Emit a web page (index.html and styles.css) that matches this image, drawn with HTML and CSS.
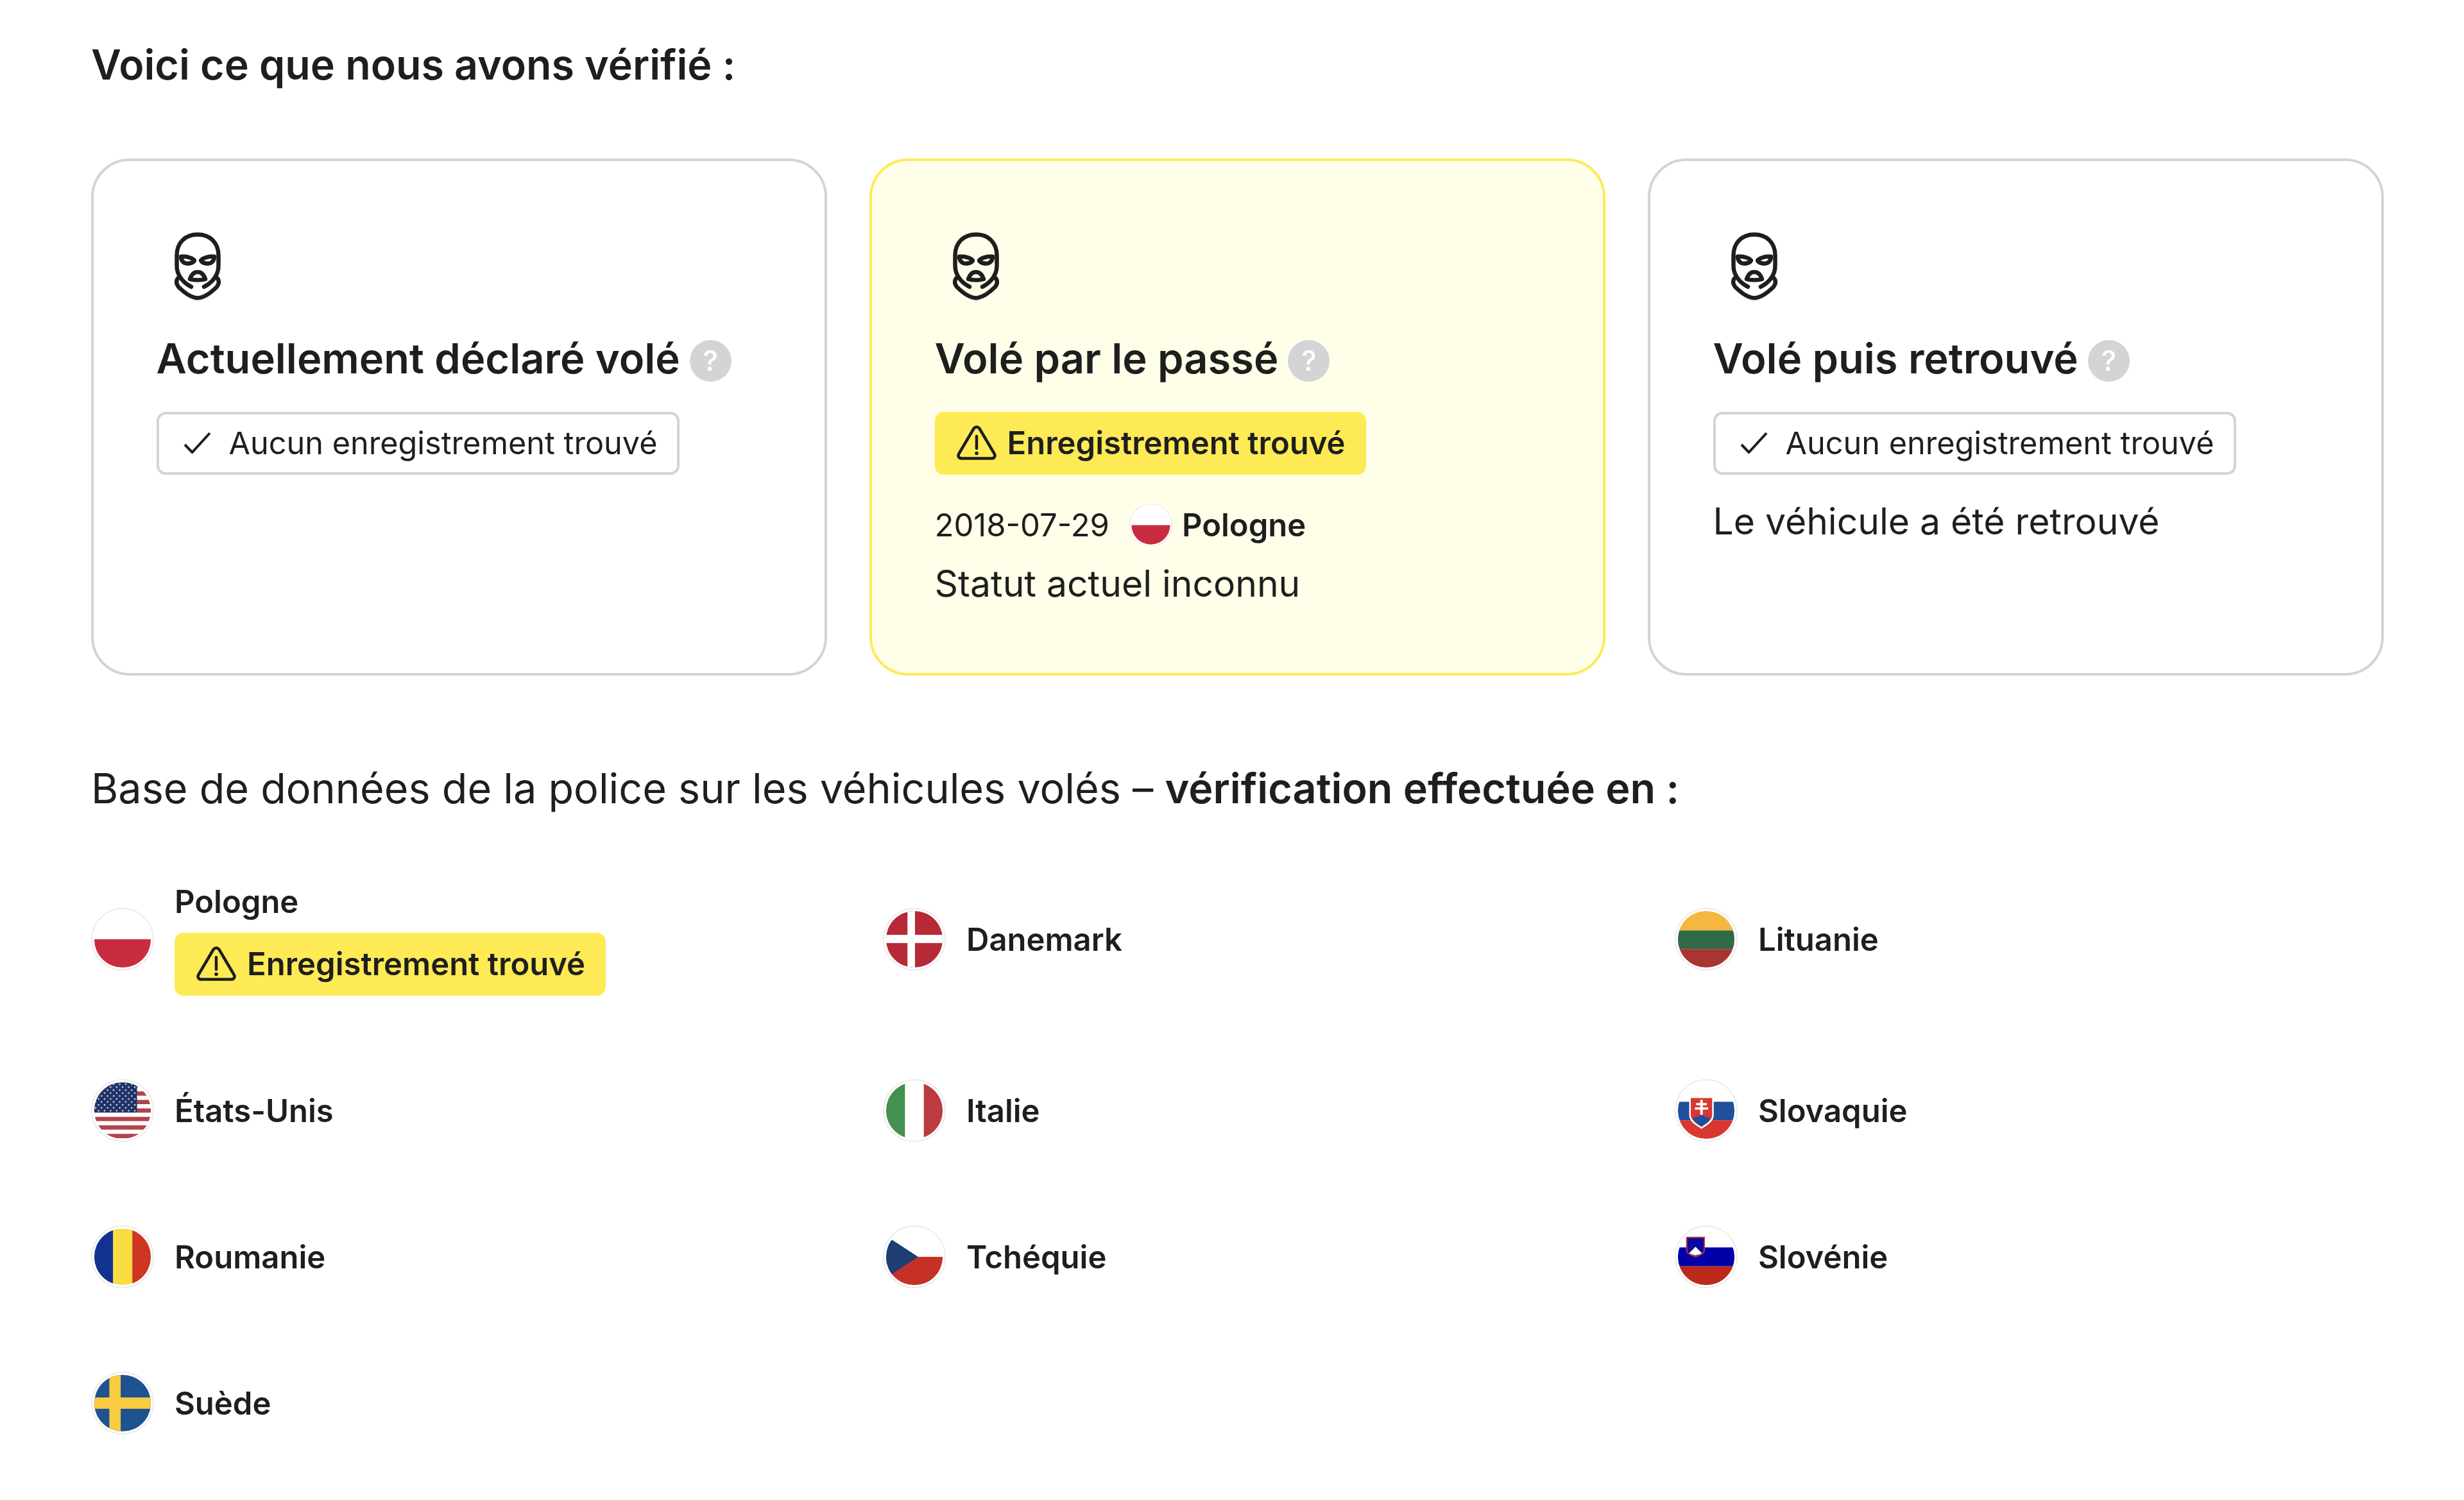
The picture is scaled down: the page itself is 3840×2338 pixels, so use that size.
FILE: index.html
```
<!DOCTYPE html>
<html lang="fr">
<head>
<meta charset="utf-8">
<title>Vérification</title>
<link rel="stylesheet" href="styles.css">
</head>
<body>
<svg class="defs" width="0" height="0" aria-hidden="true">
  <defs>
    <clipPath id="fc"><circle cx="50" cy="50" r="45"/></clipPath>
    <symbol id="mask" viewBox="0 0 72 106">
      <g fill="none" stroke="currentColor" stroke-width="6.500" stroke-linecap="round" stroke-linejoin="round">
        <path d="M26 85C12 78 3.500 66 3.500 52V36C3.500 16 17 3.500 36 3.500S68.500 16 68.500 36V52C68.500 66 60 78 46 85"/>
        <path d="M5 72C2 76 3 81 6 85C14 93 26 102 36 102.500C46 102 58 93 66 85C69 81 70 76 67 72"/>
        <path d="M10 38C18 37 28 40 31 44C29 48 21 50 16 48C12 46 10 42 10 38Z"/>
        <path d="M62 38C54 37 44 40 41 44C43 48 51 50 56 48C60 46 62 42 62 38Z"/>
        <path d="M36 62C42 62 46 67 48 73C42 75 30 75 24 73C26 67 30 62 36 62Z"/>
      </g>
    </symbol>
    <symbol id="warn" viewBox="0 0 62 54">
      <g fill="none" stroke="currentColor" stroke-width="4.500" stroke-linecap="round" stroke-linejoin="round">
        <path d="M26.500 5L3.500 44C1 48 3.500 51.500 7.500 51.500H54.500C58.500 51.500 61 48 58.500 44L35.500 5C33 1.500 29 1.500 26.500 5Z"/>
        <path d="M31 17V36"/>
      </g>
      <circle cx="31" cy="43.500" r="2.800" fill="currentColor"/>
    </symbol>
    <symbol id="check" viewBox="0 0 43 34">
      <path d="M2 20L13.500 32L41 2" fill="none" stroke="currentColor" stroke-width="4"/>
    </symbol>
    <symbol id="ring" viewBox="0 0 100 100">
      <circle cx="50" cy="50" r="49" fill="#fff" stroke="#ececec" stroke-width="2"/>
    </symbol>
    <pattern id="stars" width="9.600" height="9.400" patternUnits="userSpaceOnUse" x="5" y="6">
      <circle cx="2" cy="2" r="1.250" fill="#dfe2ea"/>
      <circle cx="6.800" cy="6.700" r="1.250" fill="#dfe2ea"/>
    </pattern>
  </defs>
</svg>

<main class="page">
  <h2 class="heading">Voici ce que nous avons vérifié :</h2>

  <section class="cards">
    <article class="card">
      <svg class="mask"><use href="#mask"/></svg>
      <h3 class="card-title">Actuellement déclaré volé<span class="help">?</span></h3>
      <div class="badge badge-ok"><svg class="check"><use href="#check"/></svg>Aucun enregistrement trouvé</div>
    </article>

    <article class="card card-found">
      <svg class="mask"><use href="#mask"/></svg>
      <h3 class="card-title">Volé par le passé<span class="help">?</span></h3>
      <div class="badge badge-found"><svg class="warn"><use href="#warn"/></svg>Enregistrement trouvé</div>
      <div class="record">
        <span>2018-07-29</span>
        <svg class="flag flag-small" viewBox="0 0 100 100"><use href="#ring"/><g clip-path="url(#fc)"><rect y="50" width="100" height="50" fill="#C92C40"/></g></svg>
        <strong>Pologne</strong>
      </div>
      <p class="note note-record">Statut actuel inconnu</p>
    </article>

    <article class="card">
      <svg class="mask"><use href="#mask"/></svg>
      <h3 class="card-title">Volé puis retrouvé<span class="help">?</span></h3>
      <div class="badge badge-ok"><svg class="check"><use href="#check"/></svg>Aucun enregistrement trouvé</div>
      <p class="note">Le véhicule a été retrouvé</p>
    </article>
  </section>

  <p class="db-line">Base de données de la police sur les véhicules volés – <strong>vérification effectuée en :</strong></p>

  <ul class="countries">
    <li class="country">
      <svg class="flag" viewBox="0 0 100 100"><use href="#ring"/><g clip-path="url(#fc)"><rect y="50" width="100" height="50" fill="#C92C40"/></g></svg>
      <div class="country-body">
        <span>Pologne</span>
        <div class="badge badge-found"><svg class="warn"><use href="#warn"/></svg>Enregistrement trouvé</div>
      </div>
    </li>
    <li class="country">
      <svg class="flag" viewBox="0 0 100 100"><use href="#ring"/><g clip-path="url(#fc)"><rect width="100" height="100" fill="#B52A36"/><rect x="39" width="12" height="100" fill="#fff"/><rect y="43" width="100" height="13" fill="#fff"/></g></svg>
      <span>Danemark</span>
    </li>
    <li class="country">
      <svg class="flag" viewBox="0 0 100 100"><use href="#ring"/><g clip-path="url(#fc)"><rect width="100" height="36" fill="#F4B840"/><rect y="36" width="100" height="29.500" fill="#2F6B47"/><rect y="65.500" width="100" height="35" fill="#A83531"/></g></svg>
      <span>Lituanie</span>
    </li>
    <li class="country">
      <svg class="flag" viewBox="0 0 100 100"><use href="#ring"/><g clip-path="url(#fc)"><rect width="100" height="100" fill="#fff"/><rect y="6" width="100" height="6.800" fill="#B4434B"/><rect y="19.500" width="100" height="6.800" fill="#B4434B"/><rect y="33" width="100" height="6.800" fill="#B4434B"/><rect y="46.500" width="100" height="6.800" fill="#B4434B"/><rect y="60" width="100" height="6.800" fill="#B4434B"/><rect y="73.500" width="100" height="6.800" fill="#B4434B"/><rect y="87" width="100" height="7" fill="#B4434B"/><rect width="73" height="53" fill="#1E3268"/><rect width="73" height="53" fill="url(#stars)"/></g></svg>
      <span>États-Unis</span>
    </li>
    <li class="country">
      <svg class="flag" viewBox="0 0 100 100"><use href="#ring"/><g clip-path="url(#fc)"><rect x="35" width="30" height="100" fill="#fff"/><rect width="35" height="100" fill="#43914F"/><rect x="65" width="35" height="100" fill="#BB3B3F"/></g></svg>
      <span>Italie</span>
    </li>
    <li class="country">
      <svg class="flag" viewBox="0 0 100 100"><use href="#ring"/><g clip-path="url(#fc)"><rect y="36" width="100" height="29.500" fill="#204F9C"/><rect y="65.500" width="100" height="35" fill="#D93731"/><path d="M23 28H62V58C62 68 50 74 42.500 79C35 74 23 68 23 58Z" fill="#fff"/><path d="M25.500 30H59.500V57C59.500 66 49 71.500 42.500 76C36 71.500 25.500 66 25.500 57Z" fill="#D93731"/><path d="M28 63C32 60 35 61 37 60C39 58 40 56.500 42.500 56.500C45 56.500 46 58 48 60C50 61 53 60 57 63C54 69 47 72.500 42.500 75.500C38 72.500 31 69 28 63Z" fill="#204F9C"/><path d="M40.500 33H44.500V38H51V41.500H44.500V45H53V48.500H44.500V57H40.500V48.500H32V45H40.500V41.500H34V38H40.500Z" fill="#fff"/></g></svg>
      <span>Slovaquie</span>
    </li>
    <li class="country">
      <svg class="flag" viewBox="0 0 100 100"><use href="#ring"/><g clip-path="url(#fc)"><rect width="35" height="100" fill="#13318F"/><rect x="35" width="30.500" height="100" fill="#FBDC40"/><rect x="65.500" width="35" height="100" fill="#CE3621"/></g></svg>
      <span>Roumanie</span>
    </li>
    <li class="country">
      <svg class="flag" viewBox="0 0 100 100"><use href="#ring"/><g clip-path="url(#fc)"><rect width="100" height="100" fill="#fff"/><rect y="50" width="100" height="50" fill="#C53126"/><path d="M-2 12L56 50L-2 88Z" fill="#1E3E74"/></g></svg>
      <span>Tchéquie</span>
    </li>
    <li class="country">
      <svg class="flag" viewBox="0 0 100 100"><use href="#ring"/><g clip-path="url(#fc)"><rect y="35" width="100" height="30" fill="#0000A8"/><rect y="65" width="100" height="35" fill="#BC2A1C"/><path d="M19 19H47V40C47 46 38 47 33 50C28 47 19 46 19 40Z" fill="#0A0AA0" stroke="#C8352A" stroke-width="2"/><path d="M23 44L28 39L33 34L38 39L43 44C39 47 36 46.500 33 48C30 46.500 27 47 23 44Z" fill="#fff"/></g></svg>
      <span>Slovénie</span>
    </li>
    <li class="country">
      <svg class="flag" viewBox="0 0 100 100"><use href="#ring"/><g clip-path="url(#fc)"><rect width="100" height="100" fill="#1F5291"/><rect x="29" width="18" height="100" fill="#F9CB40"/><rect y="41" width="100" height="18" fill="#F9CB40"/></g></svg>
      <span>Suède</span>
    </li>
  </ul>
</main>
</body>
</html>
```

FILE: styles.css
```
* { box-sizing: border-box; }

html, body { margin: 0; padding: 0; background: #fff; }

body {
  font-family: "Inter", "Liberation Sans", sans-serif;
  color: #1e1e1e;
  -webkit-font-smoothing: antialiased;
}

.defs { position: absolute; }

.page {
  width: 3840px;
  height: 2338px;
  padding: 61px 125px 0 142px;
  overflow: hidden;
}

.heading {
  margin: 0;
  font-size: 64.500px;
  line-height: 80px;
  font-weight: 600;
}

.cards {
  display: grid;
  grid-template-columns: repeat(3, 1fr);
  gap: 66px;
  margin-top: 106px;
}

.card {
  height: 806px;
  padding: 111px 98px 0 97.500px;
  border: 4px solid #d4d4d4;
  border-radius: 60px;
  background: #fff;
}

.card-found {
  background: #fffee9;
  border-color: #fdea5a;
}

.mask {
  display: block;
  width: 72px;
  height: 106px;
  margin-left: 28px;
}

.card-title {
  display: flex;
  align-items: center;
  gap: 15px;
  margin: 49px 0 0;
  font-size: 65px;
  line-height: 84px;
  font-weight: 600;
  white-space: nowrap;
}

.help {
  display: inline-flex;
  align-items: center;
  justify-content: center;
  width: 65px;
  height: 65px;
  margin-top: 6px;
  border-radius: 50%;
  background: #d4d4d4;
  color: #fff;
  font-size: 44px;
  font-weight: 500;
}

.badge {
  display: inline-flex;
  align-items: center;
  height: 98px;
  padding-bottom: 2px;
  border-radius: 14px;
  font-size: 49px;
  white-space: nowrap;
}

.card .badge { margin-top: 41px; }

.badge-ok {
  padding-left: 38px;
  padding-right: 30px;
  border: 4px solid #d4d4d4;
  font-size: 48.600px;
  font-weight: 400;
}

.badge-found {
  padding-left: 34px;
  padding-right: 32px;
  background: #fdea55;
  font-weight: 600;
}

.check {
  width: 43px;
  height: 34px;
  margin-right: 28px;
}

.warn {
  width: 62px;
  height: 54px;
  margin-right: 17px;
}

.record {
  display: flex;
  align-items: center;
  height: 68px;
  margin-top: 44px;
  font-size: 49px;
}

.record strong { font-weight: 600; }

.flag { display: block; flex: none; width: 98px; height: 98px; }

.flag-small { width: 67px; height: 67px; margin: 0 15px 0 31px; }

.note {
  margin: 38px 0 0;
  font-size: 57px;
  line-height: 70px;
}

.note-record { margin-top: 23px; }

.db-line {
  margin: 136px 0 0;
  font-size: 64.700px;
  line-height: 80px;
}

.db-line strong { font-weight: 600; }

.countries {
  display: grid;
  grid-template-columns: repeat(3, 1234px);
  grid-auto-rows: min-content;
  row-gap: 130px;
  margin: 107px 0 0;
  padding: 0;
  list-style: none;
}

.country {
  display: flex;
  align-items: center;
  gap: 32px;
  min-height: 98px;
  font-size: 49px;
  font-weight: 600;
}

.country-body {
  display: flex;
  flex-direction: column;
  align-items: flex-start;
  gap: 18px;
}

.country-body span { line-height: 60px; }
```
